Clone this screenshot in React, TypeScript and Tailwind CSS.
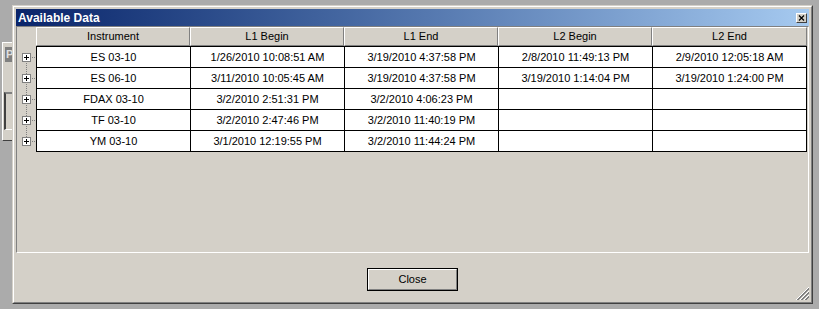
import React from "react";

const columns = ["Instrument", "L1 Begin", "L1 End", "L2 Begin", "L2 End"];

const rows = [
  ["ES 03-10", "1/26/2010 10:08:51 AM", "3/19/2010 4:37:58 PM", "2/8/2010 11:49:13 PM", "2/9/2010 12:05:18 AM"],
  ["ES 06-10", "3/11/2010 10:05:45 AM", "3/19/2010 4:37:58 PM", "3/19/2010 1:14:04 PM", "3/19/2010 1:24:00 PM"],
  ["FDAX 03-10", "3/2/2010 2:51:31 PM", "3/2/2010 4:06:23 PM", "", ""],
  ["TF 03-10", "3/2/2010 2:47:46 PM", "3/2/2010 11:40:19 PM", "", ""],
  ["YM 03-10", "3/1/2010 12:19:55 PM", "3/2/2010 11:44:24 PM", "", ""],
];

function TreeBox({ first, last }: { first: boolean; last: boolean }) {
  return (
    <svg width="19" height="21" className="block shrink-0">
      {!first && <line x1="9.5" y1="0" x2="9.5" y2="7" stroke="#808080" strokeDasharray="1 1" />}
      {!last && <line x1="9.5" y1="17" x2="9.5" y2="21" stroke="#808080" strokeDasharray="1 1" />}
      <line x1="15" y1="11.5" x2="19" y2="11.5" stroke="#808080" strokeDasharray="1 1" />
      <rect x="5.5" y="7.5" width="8" height="8" fill="#fff" stroke="#808080" />
      <line x1="7" y1="11.5" x2="12" y2="11.5" stroke="#000" />
      <line x1="9.5" y1="9" x2="9.5" y2="14" stroke="#000" />
    </svg>
  );
}

export default function App() {
  return (
    <div className="relative h-[309px] w-[819px] overflow-hidden bg-[#ababab] font-['Liberation_Sans',Arial,sans-serif] text-black">
      {/* window behind, mostly hidden */}
      <div className="absolute left-[2px] top-[42px] h-[99px] w-[20px] border-t border-l border-b border-t-white border-l-white border-b-[#404040] bg-[#d4d0c8]">
        <div className="ml-[2px] mt-[4px] h-[15px] bg-[#808080] pl-[1px] text-[11px] font-bold leading-[15px] text-[#e0e0e0]">
          P
        </div>
        <div className="ml-[1px] mt-[30px] h-[38px] border-t-2 border-l-2 border-b border-t-[#808080] border-l-[#404040] border-b-white bg-[#d4d0c8]" />
      </div>

      {/* Available Data window */}
      <div className="absolute left-[12px] top-[5px] h-[299px] w-[801px] border border-t-[#d4d0c8] border-l-[#d4d0c8] border-r-[#404040] border-b-[#404040]">
        <div className="flex h-full flex-col border border-t-white border-l-white border-r-[#808080] border-b-[#808080] bg-[#d4d0c8] p-[2px]">
          <div className="flex h-[17px] shrink-0 items-center bg-linear-to-r from-[#0a246a] to-[#a6caf0] pl-[2px] pr-[2px]">
            <span className="text-[12px] font-bold leading-none text-white">Available Data</span>
            <div className="ml-auto flex h-[10px] w-[11px] items-center justify-center border border-t-white border-l-white border-r-[#404040] border-b-[#404040] bg-[#d4d0c8]">
              <svg width="7" height="6" className="block">
                <path d="M1 0.5 L6 5.5 M6 0.5 L1 5.5" stroke="#000" strokeWidth="1.2" />
              </svg>
            </div>
          </div>

          <div className="flex h-[227px] shrink-0 flex-col border border-t-[#808080] border-l-[#808080] border-r-white border-b-white">
            <div className="flex h-[19px] shrink-0">
              <div className="w-[19px] shrink-0" />
              {columns.map((c, i) => (
                <div
                  key={c}
                  className={
                    i === 4
                      ? "flex w-[155px] shrink-0 items-center justify-center border border-t-white border-l-white border-r-[#808080] border-b-[#808080] text-[11px] leading-none"
                      : "flex w-[154px] shrink-0 items-center justify-center border border-t-white border-l-white border-r-[#808080] border-b-[#808080] text-[11px] leading-none"
                  }
                >
                  {c}
                </div>
              ))}
            </div>

            {rows.map((r, ri) => (
              <div key={r[0]} className="flex shrink-0">
                <TreeBox first={ri === 0} last={ri === rows.length - 1} />
                {r.map((v, ci) => (
                  <div
                    key={ci}
                    className={[
                      "flex shrink-0 items-center justify-center border-t border-l border-black bg-white text-[11px] leading-none",
                      ci === 4 ? "w-[155px] border-r" : "w-[154px]",
                      ri === rows.length - 1 ? "h-[22px] border-b" : "h-[21px]",
                    ].join(" ")}
                  >
                    {v}
                  </div>
                ))}
              </div>
            ))}
          </div>

          <div className="relative flex flex-1 justify-center pt-[15px]">
            <button className="h-[23px] w-[91px] border border-black bg-[#d4d0c8] p-0">
              <div className="flex h-full w-full items-center justify-center border border-t-white border-l-white border-r-[#808080] border-b-[#808080] text-[11px] leading-none">
                Close
              </div>
            </button>
            <svg width="13" height="13" className="absolute bottom-0 right-0 block">
              {[0, 4, 8].map((o) => (
                <g key={o}>
                  <line x1="13" y1={o} x2={o} y2="13" stroke="#ffffff" />
                  <line x1="13" y1={o + 1} x2={o + 1} y2="13" stroke="#808080" />
                  <line x1="13" y1={o + 2} x2={o + 2} y2="13" stroke="#808080" />
                </g>
              ))}
            </svg>
          </div>
        </div>
      </div>
    </div>
  );
}
